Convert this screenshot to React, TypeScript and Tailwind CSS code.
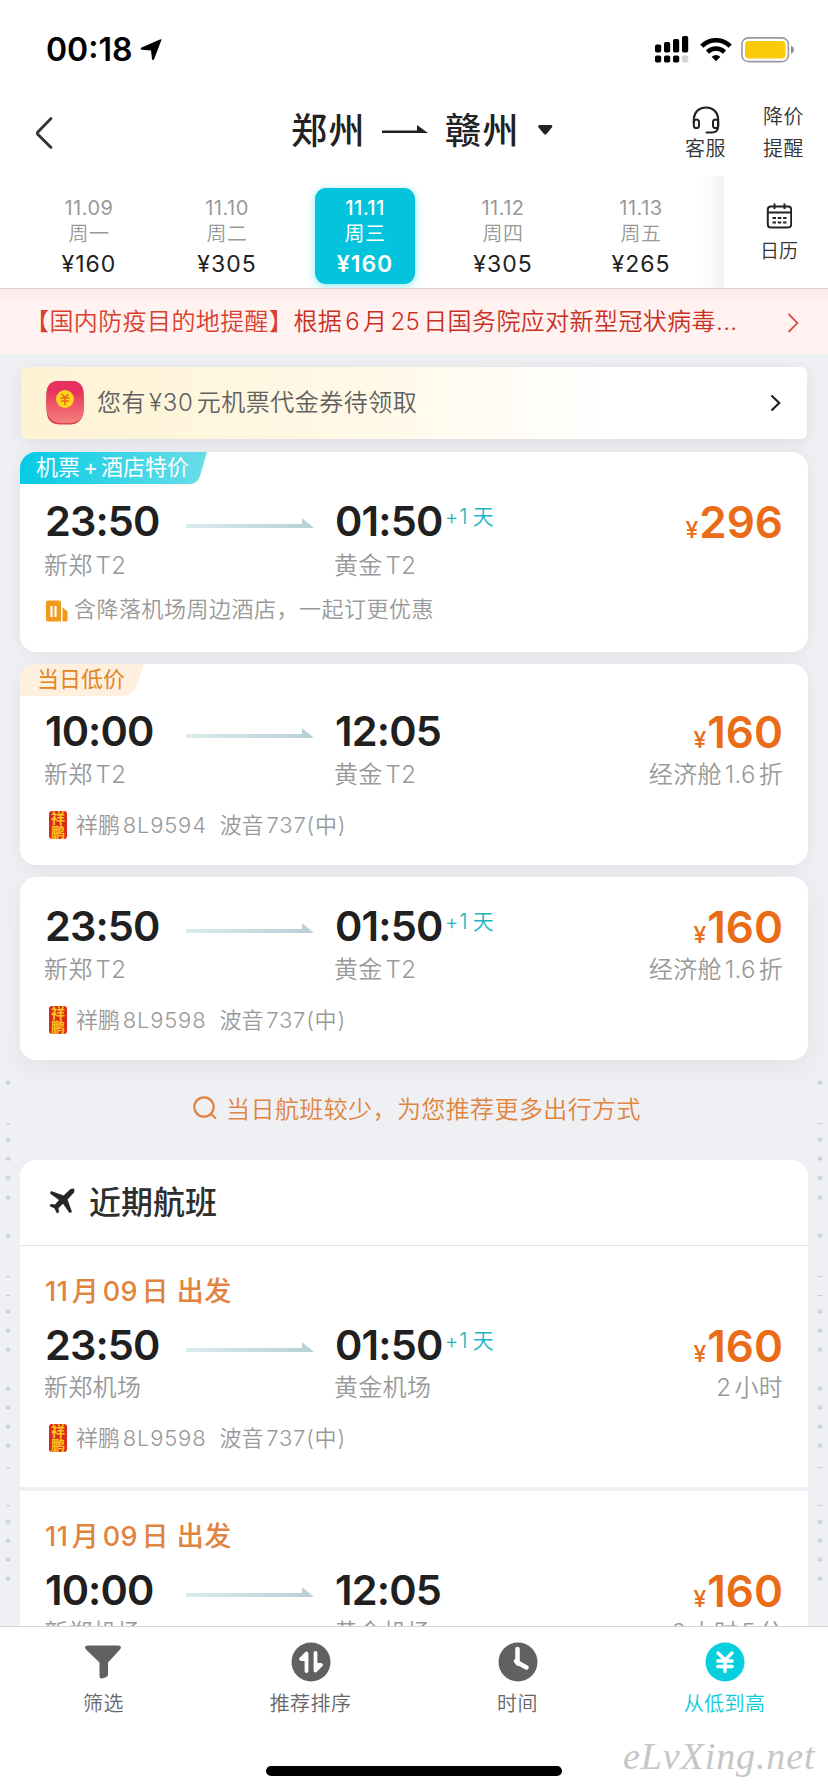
import React from 'react';

interface Flight {
  depart: string;
  arrive: string;
  nextDay?: boolean;
  from: string;
  to: string;
  price: string;
  note?: string;
  flightNo?: string;
}

const days = [
  { date: '11.09', week: '周一', price: '¥160' },
  { date: '11.10', week: '周二', price: '¥305' },
  { date: '11.11', week: '周三', price: '¥160', active: true },
  { date: '11.12', week: '周四', price: '¥305' },
  { date: '11.13', week: '周五', price: '¥265' },
];

const hotelDeal: Flight = { depart: '23:50', arrive: '01:50', nextDay: true, from: '新郑T2', to: '黄金T2', price: '296' };
const lowest: Flight = { depart: '10:00', arrive: '12:05', from: '新郑T2', to: '黄金T2', price: '160', note: '经济舱1.6折', flightNo: '8L9594' };
const late: Flight = { depart: '23:50', arrive: '01:50', nextDay: true, from: '新郑T2', to: '黄金T2', price: '160', note: '经济舱1.6折', flightNo: '8L9598' };

const recent: Flight[] = [
  { depart: '23:50', arrive: '01:50', nextDay: true, from: '新郑机场', to: '黄金机场', price: '160', note: '2小时', flightNo: '8L9598' },
  { depart: '10:00', arrive: '12:05', from: '新郑机场', to: '黄金机场', price: '160', note: '2小时5分', flightNo: '8L9594' },
];

// faint marks running down both page edges, one per line
const edgeMarks = '* -**** * --*** ****- -****'.split('');

const StatusBar = () => (
  <div className="h-[88px] shrink-0 flex items-center justify-between pl-[46px] pr-[33px] pt-[11px]">
    <div className="flex items-center gap-[8px]">
      <span className="text-[32px] leading-[40px] font-semibold text-black">00:18</span>
      <svg width="22" height="22" viewBox="0 0 22 22">
        <path d="M21.500 .8 L14.200 20 Q13.200 22 12 20.200 L11 11.500 L1.800 10.800 Q-.4 10 1.600 8.600 L20 .4 Q22 -.2 21.500 .8Z" fill="#000" />
      </svg>
    </div>
    <div className="flex items-center">
      <svg width="34" height="27" viewBox="0 0 34 27">
        <rect x="0" y="8.500" width="6.200" height="8" rx="1.800" />
        <rect x="9" y="6" width="6.200" height="10.500" rx="1.800" />
        <rect x="18" y="3" width="6.200" height="13.500" rx="1.800" />
        <rect x="27" y="0" width="6.200" height="16.500" rx="1.800" />
        <rect x="0" y="19.500" width="6.200" height="7" rx="1.800" />
        <rect x="9" y="19.500" width="6.200" height="7" rx="1.800" />
        <rect x="18" y="19.500" width="6.200" height="7" rx="1.800" />
        <rect x="27" y="19.500" width="6.200" height="7" rx="1.800" fill="#d2d2d2" />
      </svg>
      <svg width="32" height="24" viewBox="0 0 32 24" fill="none" stroke="#000" className="ml-[11px]">
        <path d="M1.800 8.200 C10 .3 22 .3 30.200 8.200" strokeWidth="4.600" />
        <path d="M7.400 14 C12.500 9.400 19.500 9.400 24.600 14" strokeWidth="4.400" />
        <path d="M11.600 18.700 Q16 15.300 20.400 18.700 L16 23.300Z" fill="#000" stroke="none" />
      </svg>
      <svg width="54" height="26" viewBox="0 0 54 26" className="ml-[9px]">
        <rect x=".9" y=".9" width="46.500" height="23.700" rx="6.500" fill="none" stroke="#9a9a9a" strokeWidth="1.600" />
        <rect x="4" y="4" width="40.500" height="17.500" rx="3.500" fill="#fbca0a" />
        <path d="M50 8.500 Q53 10 53 12.700 Q53 15.500 50 17Z" fill="#8f8f8f" />
      </svg>
    </div>
  </div>
);

const NavBar = () => (
  <div className="h-[88px] shrink-0 flex items-center pl-[34px] pr-[24px]">
    <svg width="20" height="34" viewBox="0 0 20 34" fill="none" stroke="#333" strokeWidth="2.800" strokeLinecap="round" className="mt-[2px]">
      <path d="M17 2.500 L3.500 16.500 Q3 17.200 3.500 18 L17 31.500" />
    </svg>
    <div className="flex-1 flex items-center pl-[237px] text-[#222] text-[36px] leading-[50px] font-medium tracking-[1.500px]">
      <span className="w-[75px] -mt-[2px]">郑州</span>
      <svg width="46" height="10" viewBox="0 0 46 10" className="ml-[16px] mr-[17px] -mt-[6px]">
        <path d="M0 6.500 H35 V1 L46 9 H0Z" fill="#222" />
      </svg>
      <span className="w-[75px] -mt-[2px]">赣州</span>
      <svg width="15" height="10" viewBox="0 0 15 10" className="ml-[18px] -mt-[4px]">
        <path d="M1.500 0 H13 Q15.300 .5 13.800 2.500 L8.500 9 Q7.200 10.200 6 9 L.6 2.500 Q-.5 .5 1.500 0Z" fill="#222" />
      </svg>
    </div>
    <div className="flex items-center gap-[37px] text-[20px] text-[#333] font-[350] tracking-[.5px]">
      <div className="w-[41px] flex flex-col items-center pt-[5px]">
        <svg width="28" height="28" viewBox="0 0 28 28" fill="none" stroke="#222" strokeWidth="2" strokeLinecap="round">
          <path d="M1.800 17 V12.500 C2.500 5.500 7.500 1.500 14 1.500 C20.500 1.500 25.500 5.500 26.200 12.500 V20 C26.200 24.500 24 26.500 19.500 26.500 H14.500" />
          <rect x="1.800" y="13.500" width="5.200" height="8.500" rx="2.600" />
          <rect x="21" y="13.500" width="5.200" height="8.500" rx="2.600" />
        </svg>
        <span className="leading-[30px]">客服</span>
      </div>
      <div className="w-[41px] flex flex-col leading-[32px] pt-[2px]">
        <span>降价</span>
        <span>提醒</span>
      </div>
    </div>
  </div>
);

const DateStrip = () => (
  <div className="h-[113px] shrink-0 flex border-b border-[#d3d0d0]">
    <div className="w-[724px] overflow-hidden flex pl-[20px] bg-[linear-gradient(to_left,#eff1f2_0px,#fafbfb_14px,#ffffff_30px)]">
      {days.map((day) => (
        <div key={day.date} className="w-[138px] shrink-0 flex justify-center pt-[12px]">
          {day.active ? (
            <div className="w-[100px] h-[96px] rounded-[11px] bg-[#04c3dc] text-white shadow-[0_2px_8px_rgba(0,210,230,0.45)] flex flex-col items-center pt-[7px]">
              <span className="text-[20px] leading-[26px] font-medium tracking-[.4px]">{day.date}</span>
              <span className="text-[20px] leading-[27px] tracking-[.5px]">{day.week}</span>
              <span className="text-[23px] leading-[33px] font-semibold tracking-[1px]">{day.price}</span>
            </div>
          ) : (
            <div className="w-[100px] h-[96px] flex flex-col items-center pt-[7px] text-[#999]">
              <span className="text-[20px] leading-[26px] tracking-[.5px]">{day.date}</span>
              <span className="text-[20px] leading-[27px] font-[350] tracking-[.5px]">{day.week}</span>
              <span className="text-[23px] leading-[33px] text-[#222] tracking-[1px]">{day.price}</span>
            </div>
          )}
        </div>
      ))}
    </div>
    <div className="flex-1 flex flex-col items-center pt-[27px] pl-[6px] bg-white">
      <svg width="26" height="26" viewBox="0 0 26 26" fill="none" stroke="#222" strokeWidth="2">
        <rect x="1.800" y="3.500" width="23.400" height="21" rx="3" />
        <path d="M1.800 9.500 H25.200 M8.500 .5 V6 M18.500 .5 V6" />
        <path d="M6.500 15 H10 M11.800 15 H15.300 M17.100 15 H20.500 M6.500 19.500 H10 M11.800 19.500 H15.300 M17.100 19.500 H20.500" />
      </svg>
      <span className="mt-[10px] text-[19px] leading-[26px] text-[#333] font-[350]">日历</span>
    </div>
  </div>
);

const PriceTag = ({ price }: { price: string }) => (
  <span className="h-[50px] pt-px text-[#ea6c17] font-semibold flex items-baseline">
    <span className="text-[23px] leading-[30px] font-medium mr-[1px]">¥</span>
    <span className="text-[44px] leading-[50px]">{price}</span>
  </span>
);

const RouteArrow = () => (
  <svg width="128" height="10" viewBox="0 0 128 10">
    <defs>
      <linearGradient id="route" x1="0" x2="1" y1="0" y2="0">
        <stop offset="0" stopColor="#dbebed" />
        <stop offset="1" stopColor="#b8d0d5" />
      </linearGradient>
    </defs>
    <path d="M0 6 H116 V0 L128 10 H0Z" fill="url(#route)" />
  </svg>
);

const FlightTimes = ({ flight }: { flight: Flight }) => (
  <div className="h-[50px] flex items-center text-[#202020]">
    <span className="w-[141px] text-[41.500px] leading-[50px] font-semibold tracking-[-.9px]">{flight.depart}</span>
    <div className="w-[149px] pt-[3px]">
      <RouteArrow />
    </div>
    <span className="text-[41.500px] leading-[50px] font-semibold tracking-[-.8px]">{flight.arrive}</span>
    {flight.nextDay && (
      <span className="text-[21px] leading-[30px] text-[#22b4c2] -mt-[8px] ml-[2px] font-[350] tracking-[.8px]">
        +1<span className="ml-[2px]">天</span>
      </span>
    )}
    <div className="ml-auto">
      <PriceTag price={flight.price} />
    </div>
  </div>
);

const Airports = ({ flight }: { flight: Flight }) => (
  <div className="h-[30px] flex text-[24px] leading-[32px] text-[#999] font-[350] tracking-[.3px]">
    <span className="w-[290px] -ml-[1px]">{flight.from}</span>
    <span>{flight.to}</span>
    <span className="ml-auto">{flight.note}</span>
  </div>
);

const Airline = ({ flightNo }: { flightNo?: string }) => (
  <div className="h-[30px] flex items-center text-[22px] leading-[30px] text-[#999] font-[350]">
    <span className="ml-[4px] mr-[9px] w-[18px] h-[28px] rounded-[3px] bg-[#d92a1c] text-[#ffc51f] text-[14px] leading-[14px] font-bold flex flex-col items-center justify-center">
      <span className="h-[14px]">祥</span>
      <span className="h-[14px]">鹏</span>
    </span>
    <span>祥鹏<span className="tracking-[.8px]">{flightNo}</span></span>
    <span className="ml-[13px]">波音<span className="tracking-[.8px]">737(中)</span></span>
  </div>
);

const CouponBanner = () => (
  <div className="mx-[21px] mt-[13px] h-[72px] shrink-0 rounded-[6px] bg-[linear-gradient(to_right,#fef2d3_0%,#fff9e8_45%,#ffffff_75%)] shadow-[0_3px_18px_rgba(0,0,0,0.08)] flex items-center pl-[25px] pr-[26px]">
    <svg width="38" height="44" viewBox="0 0 38 44">
      <defs>
        <linearGradient id="envelope" x1="0" x2="0" y1="0" y2="1">
          <stop offset="0" stopColor="#e61c50" />
          <stop offset="1" stopColor="#f5807a" />
        </linearGradient>
      </defs>
      <path d="M11 0 H27 Q36 1 37.500 11 Q38.500 25 37 34 Q34 43 25 43.500 H13 Q3 43 1 34 Q-.5 22 .6 11 Q2 1 11 0Z" fill="#d83e50" />
      <path d="M11 0 H27 Q36 1 37.500 11 V32 Q35 41 25 42 H13 Q4 41 1 32 L.6 11 Q2 1 11 0Z" fill="url(#envelope)" />
      <path d="M11 0 H27 Q36 1 37.300 9 Q20 20 .8 9 Q2 1 11 0Z" fill="#e83063" />
      <circle cx="19" cy="18" r="9" fill="#ffd21c" />
      <path d="M15.500 13 L19 16.500 L22.500 13 M14.500 17 H23.500 M15 20 H23 M19 16.500 V24" fill="none" stroke="#e56b1b" strokeWidth="1.500" />
    </svg>
    <span className="ml-[13px] text-[24px] leading-[30px] text-[#606060] font-[350] tracking-[.5px]">
      您有<span className="ml-[3px] tracking-[.8px]">¥30</span>元机票代金券待领取
    </span>
    <svg width="11" height="18" viewBox="0 0 11 18" fill="none" stroke="#222" strokeWidth="2.200" className="ml-auto">
      <path d="M1.500 1.500 L9.200 9 L1.500 16.500" />
    </svg>
  </div>
);

const RecentItem = ({ flight }: { flight: Flight }) => (
  <div className="h-[241px] shrink-0 pl-[25px] pr-[25px] pt-[30px]">
    <div className="h-[30px] text-[27px] leading-[31px] font-medium text-[#e0843f] tracking-[.5px]">11月09日 出发</div>
    <div className="mt-[14px]"><FlightTimes flight={flight} /></div>
    <div className="mt-[2px]"><Airports flight={flight} /></div>
    <div className="mt-[21px]"><Airline flightNo={flight.flightNo} /></div>
  </div>
);

const EdgeColumn = ({ className }: { className: string }) => (
  <div className={`absolute top-[787px] w-[16px] flex flex-col items-center text-[13px] leading-[19px] text-[#c9cbd0] ${className}`}>
    {edgeMarks.map((mark, i) => (
      <span key={i} className="h-[19.100px]">{mark}</span>
    ))}
  </div>
);

const TabBar = () => (
  <div className="h-[166px] shrink-0 relative bg-white border-t border-[#d6d6d6] grid grid-cols-4 pt-[15px] text-[20px] text-[#666] font-[350] tracking-[.4px]">
    <div className="flex flex-col items-center">
      <svg width="40" height="40" viewBox="0 0 40 40" className="mr-[1px]">
        <path d="M4.500 3.500 H35.500 Q39.500 4 37 7.500 L25 20.500 V33 Q24.500 35 19 36.500 Q16.500 36.500 16.500 34 V20.500 L3 7.500 Q.5 4 4.500 3.500Z" fill="#616161" />
      </svg>
      <span className="mt-[8px] leading-[28px]">筛选</span>
    </div>
    <div className="flex flex-col items-center">
      <svg width="40" height="40" viewBox="0 0 40 40" fill="none" stroke="#fff" strokeWidth="3.800" strokeLinecap="round" strokeLinejoin="round">
        <circle cx="20" cy="20" r="19.500" fill="#616161" stroke="none" />
        <path d="M15.500 29 V11.500 L10 17 H15.500" />
        <path d="M24.500 11 V28.500 L30 23 H24.500" />
      </svg>
      <span className="mt-[8px] leading-[28px]">推荐排序</span>
    </div>
    <div className="flex flex-col items-center">
      <svg width="40" height="40" viewBox="0 0 40 40" fill="none" stroke="#fff" strokeWidth="4.500" strokeLinecap="round" strokeLinejoin="round">
        <circle cx="20" cy="20" r="19.500" fill="#616161" stroke="none" />
        <path d="M19.500 7 V20.500 L28.500 25.500 M18 19 L20 21.500" />
      </svg>
      <span className="mt-[8px] leading-[28px]">时间</span>
    </div>
    <div className="flex flex-col items-center text-[#0bcbd8]">
      <svg width="40" height="40" viewBox="0 0 40 40" fill="none" stroke="#fff" strokeWidth="3.400" strokeLinecap="round" strokeLinejoin="round">
        <circle cx="20" cy="20" r="19.500" fill="#06d0dd" stroke="none" />
        <path d="M13 11 L20 18 L27 11 M12.800 19 H27.200 M12.800 24.500 H27.200 M20 18 V29.500" />
      </svg>
      <span className="mt-[8px] leading-[28px]">从低到高</span>
    </div>
    <div className="absolute left-[266px] top-[139px] w-[296px] h-[10px] rounded-full bg-black" />
    <span className="absolute left-[623px] top-[105px] font-['Liberation_Serif',serif] italic font-normal text-[38px] leading-[48px] tracking-[.9px] text-[#c6c6c6] whitespace-nowrap">eLvXing.net</span>
  </div>
);

const App: React.FC = () => {
  return (
    <div className="w-[828px] h-[1792px] flex flex-col overflow-hidden bg-white font-['Inter','Noto_Sans_CJK_SC',sans-serif] [text-autospace:normal]">
      <StatusBar />
      <NavBar />
      <DateStrip />

      <div className="h-[1337px] shrink-0 relative overflow-hidden flex flex-col bg-[#eff0f4]">
        <div className="h-[65px] shrink-0 flex items-center bg-[linear-gradient(to_bottom,#fbebeb_0px,#fff2f1_14px)] pl-[25px] pr-[29px] text-[24px] leading-[30px] font-[350] tracking-[.4px]">
          <span className="text-[#d8402f]">【国内防疫目的地提醒】</span>
          <span className="text-[#c9301f]">根据6月25日国务院应对新型冠状病毒...</span>
          <svg width="12" height="20" viewBox="0 0 12 20" fill="none" stroke="#d65347" strokeWidth="1.800" className="ml-auto mt-[2px]">
            <path d="M1.500 1 L10.500 10 L1.500 19" />
          </svg>
        </div>

        <CouponBanner />

        <div className="mx-[20px] mt-[13px] h-[200px] shrink-0 rounded-[16px] bg-white overflow-hidden shadow-[0_3px_18px_rgba(0,0,0,0.06)]">
          <div className="w-[187px] h-[32px] relative flex items-center pl-[16px]">
            <svg width="187" height="32" viewBox="0 0 187 32" className="absolute inset-0">
              <defs>
                <linearGradient id="deal" x1="0" x2="1" y1="0" y2="0">
                  <stop offset="0" stopColor="#05cbe3" />
                  <stop offset="1" stopColor="#6adde8" />
                </linearGradient>
              </defs>
              <path d="M0 0 H187 L180 24 Q177 32 170 32 H0Z" fill="url(#deal)" />
            </svg>
            <span className="relative whitespace-nowrap text-[22px] leading-[30px] text-white [word-spacing:-3px] -mt-[2px]">机票 + 酒店特价</span>
          </div>
          <div className="px-[25px] pt-[12px]">
            <FlightTimes flight={hotelDeal} />
            <div className="mt-[4px]"><Airports flight={hotelDeal} /></div>
            <div className="mt-[14px] h-[30px] flex items-center text-[22px] leading-[30px] text-[#999] font-[350] tracking-[.5px]">
              <svg width="22" height="22" viewBox="0 0 22 22" className="ml-[1px] mr-[6px] mt-[4px]">
                <path d="M2 .5 H13 Q15 .5 15 2.500 V21.500 H2 Q0 21.500 0 19.500 V2.500 Q0 .5 2 .5Z" fill="#f19a1a" />
                <path d="M16.500 7.500 L21 11 Q21.500 11.500 21.500 12.500 V20 Q21.500 21.500 20 21.500 H16.500Z" fill="#f19a1a" />
                <path d="M5.500 6 V17 M9.500 6 V17" stroke="#fff" strokeWidth="2.200" />
              </svg>
              <span>含降落机场周边酒店，一起订更优惠</span>
            </div>
          </div>
        </div>

        <div className="mx-[20px] mt-[12px] h-[201px] shrink-0 rounded-[16px] bg-white overflow-hidden shadow-[0_3px_18px_rgba(0,0,0,0.06)]">
          <div className="w-[124px] h-[32px] relative flex items-center pl-[17px]">
            <svg width="124" height="32" viewBox="0 0 124 32" className="absolute inset-0">
              <path d="M0 0 H124 L117 21 Q113 32 103 32 H0Z" fill="#feefdf" />
            </svg>
            <span className="relative text-[22px] leading-[30px] text-[#e0861c] -mt-[2px]">当日低价</span>
          </div>
          <div className="px-[25px] pt-[10px]">
            <FlightTimes flight={lowest} />
            <div className="mt-[3px]"><Airports flight={lowest} /></div>
            <div className="mt-[21px]"><Airline flightNo={lowest.flightNo} /></div>
          </div>
        </div>

        <div className="mx-[20px] mt-[12px] h-[183px] shrink-0 rounded-[16px] bg-white px-[25px] pt-[24px] shadow-[0_8px_30px_rgba(0,0,0,0.06)]">
          <FlightTimes flight={late} />
          <div className="mt-[3px]"><Airports flight={late} /></div>
          <div className="mt-[21px]"><Airline flightNo={late.flightNo} /></div>
        </div>

        <div className="h-[100px] shrink-0 flex items-center justify-center pl-[6px] text-[24px] leading-[30px] text-[#e0843f] font-[350] tracking-[.4px]">
          <svg width="24" height="24" viewBox="0 0 24 24" fill="none" stroke="#e0843f" strokeWidth="2.200" className="mr-[9px] -mt-[4px]">
            <circle cx="11" cy="11" r="9.700" />
            <path d="M17.500 17.500 L23 22.500" />
          </svg>
          <span>当日航班较少，为您推荐更多出行方式</span>
        </div>

        <div className="mx-[20px] shrink-0 rounded-t-[16px] bg-white">
          <div className="h-[86px] flex items-center pl-[29px] border-b border-[#e2e2e4]">
            <svg width="26" height="26" viewBox="0 0 26 26" fill="#262626" className="-mt-[3px]">
              <path d="M25 .8 Q26 2 25 4.500 L18.500 11.500 L23 24 L20.500 25 L14 15.800 L9.500 20 L10 24 L8 25.500 L5.500 20.500 L.5 18 L2 16 L6 16.500 L10 12 L1 5.500 L2 3 L14.500 7.500 L21.500 1 Q24 0 25 .8Z" />
            </svg>
            <span className="ml-[14px] text-[32px] leading-[40px] font-medium text-[#2e2e2e]">近期航班</span>
          </div>
          <RecentItem flight={recent[0]} />
          <div className="h-[4px] bg-[#eff0f4]" />
          <RecentItem flight={recent[1]} />
        </div>

        <EdgeColumn className="left-0" />
        <EdgeColumn className="right-0" />
      </div>

      <TabBar />
    </div>
  );
};

export default App;
